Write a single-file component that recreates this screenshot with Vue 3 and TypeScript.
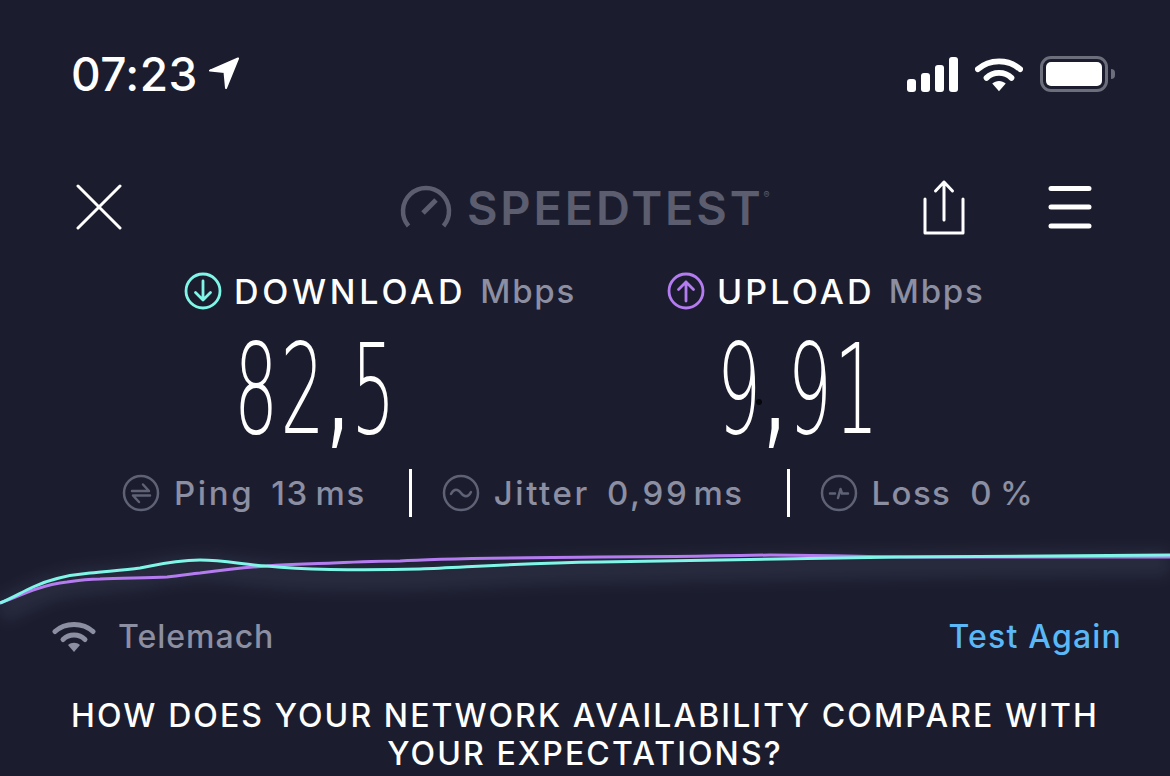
<template>
  <div class="screen">
    <!-- status bar -->
    <div class="status">
      <div class="clock">
        <span class="time">07:23</span>
        <svg class="locate" width="32" height="32" viewBox="0 0 32 32">
          <path d="M30 1.500 2 13.600 16.500 15 18 31Z" fill="#fff" stroke="#fff" stroke-width="2" stroke-linejoin="round" />
        </svg>
      </div>
      <div class="indicators">
        <svg width="52" height="36" viewBox="0 0 52 36">
          <rect x="1" y="23" width="9" height="13" rx="3" fill="#fff" />
          <rect x="15" y="17" width="9" height="19" rx="3" fill="#fff" />
          <rect x="29" y="9" width="9" height="27" rx="3" fill="#fff" />
          <rect x="43" y="1" width="9" height="35" rx="3" fill="#fff" />
        </svg>
        <svg class="wifi" width="48" height="38" viewBox="0 0 50 38">
          <path d="M3 14C15 3 35 3 47 14" fill="none" stroke="#fff" stroke-width="6" stroke-linecap="round" />
          <path d="M12 23C19 16 31 16 38 23" fill="none" stroke="#fff" stroke-width="6" stroke-linecap="round" />
          <path d="M18 29C22 25.500 28 25.500 32 29L25 37Z" fill="#fff" />
        </svg>
        <div class="battery">
          <div class="battery-fill"></div>
          <div class="battery-nub"></div>
        </div>
      </div>
    </div>

    <!-- nav -->
    <div class="nav">
      <svg class="close" width="46" height="46" viewBox="0 0 46 46">
        <path d="M2 2 44 44M44 2 2 44" stroke="#fff" stroke-width="3" stroke-linecap="round" />
      </svg>
      <div class="logo">
        <svg width="52" height="46" viewBox="0 0 52 46">
          <path d="M8.500 42A23 23 0 1 1 43.500 42" fill="none" stroke="#5c5e70" stroke-width="4.500" />
          <path d="M23 29 36 16" fill="none" stroke="#5c5e70" stroke-width="5" />
        </svg>
        <span class="logo-text">SPEEDTEST</span>
        <span class="logo-mark">®</span>
      </div>
      <div class="nav-right">
        <svg width="42" height="56" viewBox="0 0 42 56">
          <path d="M21 3V41M12.500 12 21 3 29.500 12" fill="none" stroke="#fff" stroke-width="3" stroke-linecap="round" stroke-linejoin="round" />
          <path d="M2 20V54H40V20" fill="none" stroke="#fff" stroke-width="3" stroke-linecap="round" stroke-linejoin="round" />
        </svg>
        <svg width="44" height="44" viewBox="0 0 44 44">
          <path d="M3 3.500H41M3 22H41M3 41H41" stroke="#fff" stroke-width="5" stroke-linecap="round" />
        </svg>
      </div>
    </div>

    <!-- results -->
    <div class="results">
      <div v-for="r in results" :key="r.label" class="result" :class="r.label.toLowerCase()">
        <div class="result-head">
          <svg width="38" height="38" viewBox="0 0 38 38">
            <circle cx="19" cy="19" r="17" fill="none" :stroke="r.color" stroke-width="2.800" />
            <path :d="r.arrow" fill="none" :stroke="r.color" stroke-width="2.800" stroke-linecap="round" stroke-linejoin="round" />
          </svg>
          <span class="result-label">{{ r.label }}</span>
          <span class="result-unit">Mbps</span>
        </div>
        <div class="result-value">{{ r.whole }}<span class="comma">,</span>{{ r.frac }}</div>
        <div v-if="r.speck" class="speck"></div>
      </div>
    </div>

    <!-- ping, jitter, loss -->
    <div class="stats">
      <div class="stat">
        <svg width="38" height="38" viewBox="0 0 38 38">
          <circle cx="19" cy="19" r="17" fill="none" stroke="#5f6175" stroke-width="2.500" />
          <path d="M10 17H27L21 10.500M28 21.500H11L17 28" fill="none" stroke="#5f6175" stroke-width="2.500" stroke-linecap="round" stroke-linejoin="round" />
        </svg>
        <span class="stat-name">Ping</span>
        <span class="stat-val">13<small>ms</small></span>
      </div>
      <div class="divider"></div>
      <div class="stat jitter">
        <svg width="38" height="38" viewBox="0 0 38 38">
          <circle cx="19" cy="19" r="17" fill="none" stroke="#5f6175" stroke-width="2.500" />
          <path d="M9 20C12 14 16 15 19 19S26 24 29 18" fill="none" stroke="#5f6175" stroke-width="2.500" stroke-linecap="round" />
        </svg>
        <span class="stat-name">Jitter</span>
        <span class="stat-val">0,99<small>ms</small></span>
      </div>
      <div class="divider"></div>
      <div class="stat loss">
        <svg width="38" height="38" viewBox="0 0 38 38">
          <circle cx="19" cy="19" r="17" fill="none" stroke="#5f6175" stroke-width="2.500" />
          <path d="M10 19.500H15M18 24 20.500 15 22 19.500H28" fill="none" stroke="#5f6175" stroke-width="2.500" stroke-linecap="round" stroke-linejoin="round" />
        </svg>
        <span class="stat-name">Loss</span>
        <span class="stat-val">0<small>%</small></span>
      </div>
    </div>

    <!-- graph -->
    <svg class="graph" width="1170" height="90" viewBox="0 530 1170 90">
      <defs>
        <filter id="soft" x="-5%" y="-200%" width="110%" height="500%">
          <feGaussianBlur stdDeviation="8" />
        </filter>
      </defs>
      <path :d="cyanLine" fill="none" stroke="#a0a4d8" stroke-opacity="0.1" stroke-width="24" transform="translate(0 8)" filter="url(#soft)" />
      <path :d="purpleLine" fill="none" stroke="#b47cf0" stroke-width="3" />
      <path :d="cyanLine" fill="none" stroke="#7ff6e8" stroke-width="3" />
    </svg>

    <!-- provider -->
    <div class="provider">
      <div class="provider-name">
        <svg width="44" height="34" viewBox="0 0 44 34">
          <path d="M3 12.500C13 3 31 3 41 12.500" fill="none" stroke="#8c8ea2" stroke-width="5" stroke-linecap="round" />
          <path d="M11 20.500C17 14.500 27 14.500 33 20.500" fill="none" stroke="#8c8ea2" stroke-width="5" stroke-linecap="round" />
          <path d="M16 26C19.500 23 24.500 23 28 26L22 33Z" fill="#8c8ea2" />
        </svg>
        <span>Telemach</span>
      </div>
      <span class="again">Test Again</span>
    </div>

    <div class="question">HOW DOES YOUR NETWORK AVAILABILITY COMPARE WITH<br />YOUR EXPECTATIONS?</div>
  </div>
</template>

<script setup lang="ts">
interface Result {
  label: string
  whole: string
  frac: string
  color: string
  arrow: string
  speck?: boolean
}

const results: Result[] = [
  { label: 'DOWNLOAD', whole: '82', frac: '5', color: '#7ff6e8', arrow: 'M19 9V28M11.500 20.500 19 28 26.500 20.500' },
  { label: 'UPLOAD', whole: '9', frac: '91', color: '#b47cf0', arrow: 'M19 29V10M11.500 17.500 19 10 26.500 17.500', speck: true },
]

const cyanLine =
  'M0 603C12 598 22 592 33 587C50 579 68 575 90 573C110 571 125 570 140 568C155 565 175 560 200 560C225 560 245 565 267 566C285 568 300 569 330 569.500C360 570 385 570 420 569C470 567 520 563 600 562C700 561 800 558 900 557C1000 556 1100 555 1170 555'
const purpleLine =
  'M0 603C12 599 22 594 33 590C45 586 55 583 67 582C80 580 90 579 100 579C120 578 145 578 167 577C180 576 190 574 200 573C215 571 250 567 267 566C290 564 310 564 333 563C355 562 380 561 400 561C440 558 500 558 600 557C660 557 720 556 770 555C820 555 870 557 920 557C1000 557 1100 557 1170 557'
</script>

<style>
html,
body {
  margin: 0;
  background: #1b1d2e;
}
</style>

<style scoped>
.screen {
  width: 1170px;
  height: 776px;
  overflow: hidden;
  background: #1b1d2e;
  color: #fff;
  font-family: Inter, "Noto Sans", sans-serif;
  display: flex;
  flex-direction: column;
}

.status {
  height: 148px;
  flex: none;
  display: flex;
  align-items: center;
  justify-content: space-between;
  padding: 0 62px 0 71px;
}

.clock {
  display: flex;
  align-items: center;
  gap: 10px;
}

.time {
  font-size: 46px;
  font-weight: 500;
  line-height: 1;
  letter-spacing: 0.400px;
}

.locate {
  margin-top: -3px;
}

.indicators {
  display: flex;
  align-items: center;
  gap: 17px;
}

.wifi {
  margin-top: -1px;
}

.battery {
  position: relative;
  width: 68px;
  height: 36px;
  box-sizing: border-box;
  border: 3px solid #6d6e7c;
  border-radius: 11px;
  padding: 3px;
}

.battery-fill {
  height: 100%;
  background: #fff;
  border-radius: 5px;
}

.battery-nub {
  position: absolute;
  right: -10px;
  top: 10px;
  width: 4px;
  height: 10px;
  background: #6d6e7c;
  border-radius: 0 4px 4px 0;
}

.nav {
  height: 118px;
  flex: none;
  display: flex;
  align-items: center;
  padding: 0 78px 0 76px;
}

.logo {
  margin-left: 278px;
  display: flex;
  align-items: center;
  gap: 15px;
  color: #5c5e70;
}

.logo-text {
  font-size: 47px;
  font-weight: 600;
  line-height: 1;
  letter-spacing: 2.800px;
}

.logo-mark {
  font-size: 9px;
  margin: -26px 0 0 -15px;
}

.nav-right {
  margin-left: auto;
  display: flex;
  align-items: center;
  gap: 83px;
}

.results {
  height: 194px;
  flex: none;
  display: flex;
  padding-left: 184px;
  gap: 91px;
}

.result {
  position: relative;
}

.result-head {
  height: 50px;
  display: flex;
  align-items: center;
}

.result-label {
  margin-left: 12px;
  font-size: 34px;
  font-weight: 500;
  letter-spacing: 3.800px;
}

.upload .result-label {
  letter-spacing: 3.200px;
}

.result-unit {
  margin-left: 14px;
  font-size: 33px;
  font-weight: 500;
  letter-spacing: 1.750px;
  color: #8c8ea2;
}

.result-value {
  margin: 4px 0 0 50px;
  font-family: "DejaVu Sans", sans-serif;
  font-weight: 200;
  font-size: 124px;
  line-height: 140px;
  letter-spacing: 4px;
  white-space: nowrap;
  transform: scaleX(0.56);
  transform-origin: left center;
}

.comma {
  font-weight: 400;
}

.speck {
  position: absolute;
  left: 89px;
  top: 133px;
  width: 6px;
  height: 6px;
  border-radius: 50%;
  background: #05060a;
}

.stats {
  height: 50px;
  margin-top: 8px;
  flex: none;
  display: flex;
  align-items: center;
  padding-left: 122px;
}

.stat {
  display: flex;
  align-items: center;
  font-size: 33px;
  font-weight: 500;
  color: #8c8ea2;
}

.stat-name {
  margin: 0 17px 0 14px;
  letter-spacing: 2.600px;
}

.stat-val {
  letter-spacing: 1.500px;
}

.stat-val small {
  font-size: inherit;
  letter-spacing: 1.500px;
  margin-left: 7px;
}

.jitter .stat-val {
  letter-spacing: 2.700px;
}

.jitter .stat-val small {
  margin-left: 4px;
}

.loss .stat-name {
  margin-right: 19px;
  letter-spacing: 1.400px;
}

.divider {
  width: 3px;
  height: 48px;
  margin: 0 30px 0 43px;
  background: #fff;
}

.graph {
  flex: none;
  display: block;
  margin-top: 12px;
  overflow: visible;
}

.provider {
  height: 32px;
  flex: none;
  display: flex;
  align-items: center;
  justify-content: space-between;
  padding: 0 48px 0 52px;
  font-size: 32px;
  font-weight: 500;
}

.provider-name {
  display: flex;
  align-items: center;
  gap: 22px;
  color: #8c8ea2;
  letter-spacing: 1px;
}

.again {
  color: #5ab8f8;
  letter-spacing: 1.200px;
}

.question {
  margin-top: 45px;
  text-align: center;
  font-size: 32px;
  font-weight: 500;
  line-height: 38px;
  letter-spacing: 2.100px;
}
</style>
